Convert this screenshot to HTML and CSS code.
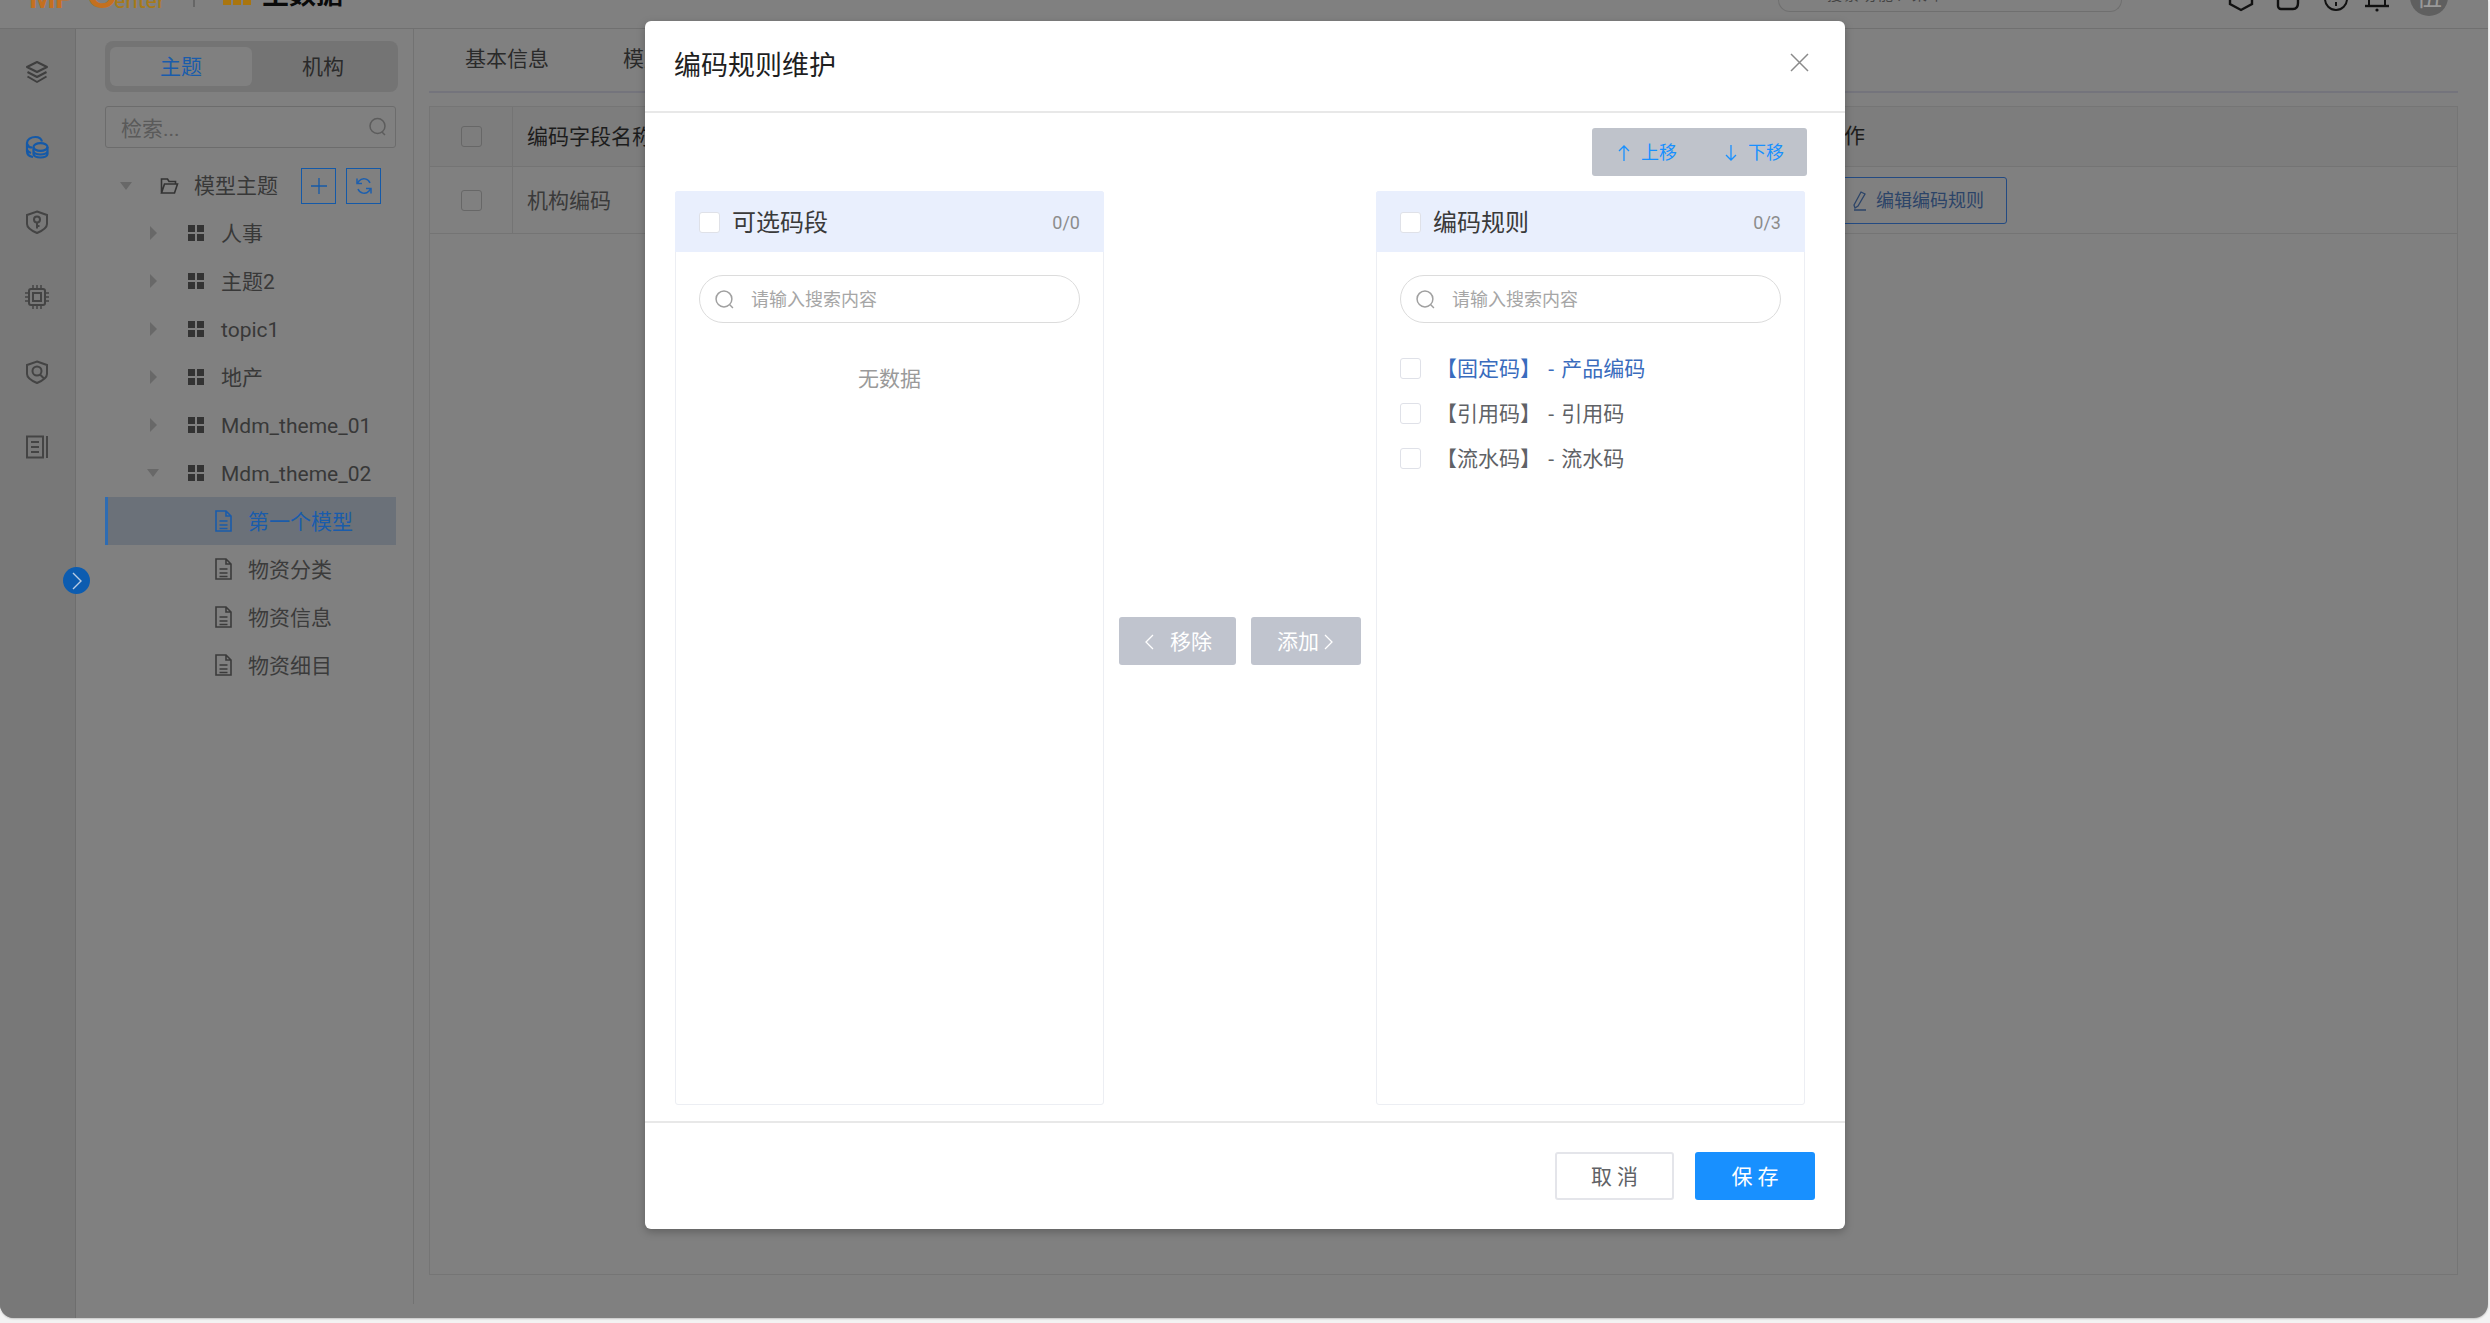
FILE: index.html
```html
<!DOCTYPE html>
<html lang="zh">
<head>
<meta charset="utf-8">
<title>编码规则维护</title>
<link rel="stylesheet" href="styles.css">
</head>
<body>
<div class="page">
  <header class="topbar">
    <div class="logo"><span class="logo-big">MP</span><span class="logo-c">C</span><span class="logo-small">enter</span></div>
    <span class="top-sep"></span>
    <svg class="brand-icon" width="28" height="24" viewBox="0 0 28 24"><path fill="#a9750f" d="M0 0h8v24H0zM10 6h8v18h-8zM20 0h8v24h-8z"/></svg>
    <span class="brand">主数据</span>
    <div class="top-search"><span class="top-search-text">搜索功能、菜单</span></div>
    <div class="top-icons">
      <svg width="26" height="36" viewBox="0 0 26 36"><path d="M2 14v12l11 6 11-6V14" fill="none" stroke="#111" stroke-width="2.4"/></svg>
      <svg width="38" height="36" viewBox="0 0 26 36"><path d="M3 22v6a3 3 0 0 0 3 3h12c4 0 5-3 5-6V10" fill="none" stroke="#111" stroke-width="2.4"/></svg>
      <svg width="28" height="36" viewBox="0 0 24 36"><circle cx="12" cy="21" r="11" fill="none" stroke="#111" stroke-width="2"/><path d="M12 24v4" stroke="#111" stroke-width="2"/></svg>
      <svg width="24" height="36" viewBox="0 0 24 36"><path d="M4 10v18M20 10v18" stroke="#111" stroke-width="2" fill="none"/><path d="M0 28h24" stroke="#111" stroke-width="2.4"/><circle cx="12" cy="32" r="1.6" fill="#111"/></svg>
      <div class="avatar"><span class="avatar-text">伍</span></div>
    </div>
  </header>

  <div class="main">
    <nav class="rail">
      <svg class="rail-icon" width="24" height="24" viewBox="0 0 24 24" fill="none" stroke="#3f3f3f" stroke-width="2" stroke-linejoin="round"><path d="M12 2 2 7l10 5 10-5z"/><path d="M2.5 12 12 17l9.500-5"/><path d="M2.500 16.500 12 22l9.500-5.500"/></svg>
      <svg class="rail-icon" width="24" height="24" viewBox="0 0 24 24" fill="none" stroke="#1459a8" stroke-width="2.200"><path d="M17 6.500C16 3 13 2 10.500 2 6 2 2 4.500 2 8v8c0 3 2 5.500 6 6"/><path d="M2 9c1 2.500 3.500 3.500 5 3.500M2 15c1 1.500 2.500 2.500 4 3"/><ellipse cx="15.500" cy="12" rx="7" ry="3.800"/><path d="M8.500 12v7c0 2 3 3.500 7 3.500s7-1.500 7-3.500v-7M8.500 16c0 2 3 3.500 7 3.500s7-1.500 7-3.500"/></svg>
      <svg class="rail-icon" width="24" height="24" viewBox="0 0 24 24" fill="none" stroke="#444" stroke-width="2"><path d="M12 1.500 22 5v9c0 4-4 6.500-10 9-6-2.500-10-5-10-9V5z"/><circle cx="12" cy="9.500" r="3"/><path d="M12 12.500v6M12 16h2.500"/></svg>
      <svg class="rail-icon" width="24" height="24" viewBox="0 0 24 24" fill="none" stroke="#444" stroke-width="2"><rect x="4" y="4" width="16" height="16" rx="2"/><rect x="8" y="8" width="8" height="8"/><path d="M8 0v4M12 0v4M16 0v4M8 20v4M12 20v4M16 20v4M0 8h4M0 12h4M0 16h4M20 8h4M20 12h4M20 16h4" stroke-width="1.500"/></svg>
      <svg class="rail-icon" width="24" height="24" viewBox="0 0 24 24" fill="none" stroke="#444" stroke-width="2"><path d="M12 1.500 22 5v9c0 4-4 6.500-10 9-6-2.500-10-5-10-9V5z"/><circle cx="12" cy="11" r="4.500"/><path d="m15 14.500 4 4"/></svg>
      <svg class="rail-icon" width="24" height="24" viewBox="0 0 24 24" fill="none" stroke="#444" stroke-width="2"><rect x="2" y="1.500" width="16" height="21"/><path d="M6 7h8M6 12h8M6 17h8M22 1v22"/></svg>
    </nav>
    <button class="rail-toggle" type="button"><svg width="10" height="18" viewBox="0 0 10 18" fill="none" stroke="#b9cde4" stroke-width="1.400"><path d="m1 1 8 8-8 8"/></svg></button>

    <aside class="side">
      <div class="seg">
        <div class="seg-item seg-on">主题</div>
        <div class="seg-item">机构</div>
      </div>
      <div class="side-search">
        <span>检索...</span>
        <svg width="18" height="20" viewBox="0 0 18 20" fill="none" stroke="#5c5c5c" stroke-width="1.500"><circle cx="8.500" cy="9" r="7.500"/><path d="m13 15 3 3"/></svg>
      </div>
      <div class="tree">
        <div class="row row-root">
          <span class="caret caret-down caret-root"></span>
          <svg class="ico-folder" width="19" height="18" viewBox="0 0 19 18" fill="none" stroke="#333" stroke-width="1.600"><path d="M1.500 16V2h6l1.500 2.500h6.500V7M1.500 16h13l3-9H4.500z"/></svg>
          <span class="label">模型主题</span>
          <button class="mini" type="button"><svg width="16" height="16" viewBox="0 0 16 16" stroke="#1459a8" stroke-width="1.300"><path d="M8 0v16M0 8h16"/></svg></button>
          <button class="mini" type="button"><svg width="16" height="18" viewBox="0 0 16 18" fill="none" stroke="#1d5fae" stroke-width="1.500"><path d="M14 6a6.500 6.500 0 0 0-11-2L1.500 6M2 12a6.500 6.500 0 0 0 11 2l1.500-2"/><path d="M1 1.500V6.500h5M15 16.500V11.500h-5"/></svg></button>
        </div>
        <div class="row row-child"><span class="caret caret-right"></span><span class="grid4"><i></i><i></i><i></i><i></i></span><span class="label">人事</span></div>
        <div class="row row-child"><span class="caret caret-right"></span><span class="grid4"><i></i><i></i><i></i><i></i></span><span class="label">主题2</span></div>
        <div class="row row-child"><span class="caret caret-right"></span><span class="grid4"><i></i><i></i><i></i><i></i></span><span class="label">topic1</span></div>
        <div class="row row-child"><span class="caret caret-right"></span><span class="grid4"><i></i><i></i><i></i><i></i></span><span class="label">地产</span></div>
        <div class="row row-child"><span class="caret caret-right"></span><span class="grid4"><i></i><i></i><i></i><i></i></span><span class="label">Mdm_theme_01</span></div>
        <div class="row row-child"><span class="caret caret-down"></span><span class="grid4"><i></i><i></i><i></i><i></i></span><span class="label">Mdm_theme_02</span></div>
        <div class="row row-leaf row-on"><svg class="ico-file" width="17" height="22" viewBox="0 0 17 22" fill="none" stroke="currentColor" stroke-width="1.600"><path d="M1 1h10l5 5v15H1zM11 1v5h5M4.500 11h8M4.500 15h8M4.500 18.500h8"/></svg><span class="label">第一个模型</span></div>
        <div class="row row-leaf"><svg class="ico-file" width="17" height="22" viewBox="0 0 17 22" fill="none" stroke="currentColor" stroke-width="1.600"><path d="M1 1h10l5 5v15H1zM11 1v5h5M4.500 11h8M4.500 15h8M4.500 18.500h8"/></svg><span class="label">物资分类</span></div>
        <div class="row row-leaf"><svg class="ico-file" width="17" height="22" viewBox="0 0 17 22" fill="none" stroke="currentColor" stroke-width="1.600"><path d="M1 1h10l5 5v15H1zM11 1v5h5M4.500 11h8M4.500 15h8M4.500 18.500h8"/></svg><span class="label">物资信息</span></div>
        <div class="row row-leaf"><svg class="ico-file" width="17" height="22" viewBox="0 0 17 22" fill="none" stroke="currentColor" stroke-width="1.600"><path d="M1 1h10l5 5v15H1zM11 1v5h5M4.500 11h8M4.500 15h8M4.500 18.500h8"/></svg><span class="label">物资细目</span></div>
      </div>
    </aside>

    <section class="content">
      <div class="tabs">
        <span class="tab">基本信息</span>
        <span class="tab">模型字段</span>
      </div>
      <div class="box">
        <div class="t-row t-head">
          <div class="t-check"><span class="cb-dim"></span></div>
          <div class="t-name">编码字段名称</div>
          <div class="t-op">操作</div>
        </div>
        <div class="t-row t-body">
          <div class="t-check"><span class="cb-dim"></span></div>
          <div class="t-name">机构编码</div>
          <div class="t-op">
            <button class="edit-btn" type="button">
              <svg width="14" height="20" viewBox="0 0 14 20" fill="none" stroke="#2c4468" stroke-width="1.300"><path d="m8 1 4 2-7 12-3 2-1-3zM1 19h12"/></svg>
              编辑编码规则
            </button>
          </div>
        </div>
      </div>
    </section>
  </div>

  <div class="modal">
    <div class="m-head">
      <span class="m-title">编码规则维护</span>
      <svg class="m-close" width="19" height="19" viewBox="0 0 19 19" stroke="#8a8a8a" stroke-width="1.500"><path d="m1 1 17 17M18 1 1 18"/></svg>
    </div>
    <div class="m-body">
      <div class="m-tools">
        <div class="move-group">
          <span class="move-item"><svg width="12" height="16" viewBox="0 0 12 16" fill="none" stroke="#1890ff" stroke-width="1.300"><path d="M6 16V1M1 6l5-5 5 5"/></svg>上移</span>
          <span class="move-item"><svg width="12" height="16" viewBox="0 0 12 16" fill="none" stroke="#1890ff" stroke-width="1.300"><path d="M6 0v15M1 10l5 5 5-5"/></svg>下移</span>
        </div>
      </div>
      <div class="transfer">
        <div class="t-panel">
          <div class="tp-head">
            <span class="cb cb-head"></span>
            <span class="tp-title">可选码段</span>
            <span class="tp-count">0/0</span>
          </div>
          <div class="tp-search">
            <svg width="19" height="19" viewBox="0 0 18 18" fill="none" stroke="#a0a0a0" stroke-width="1.400"><circle cx="8.500" cy="8.500" r="7.500"/><path d="m14 14 3 3"/></svg>
            <span class="tp-ph">请输入搜索内容</span>
          </div>
          <div class="tp-empty">无数据</div>
        </div>
        <div class="t-ops">
          <button class="op-btn op-remove" type="button"><svg width="9" height="16" viewBox="0 0 9 16" fill="none" stroke="#fff" stroke-width="1.300"><path d="M8 1 1 8l7 7"/></svg>移除</button>
          <button class="op-btn op-add" type="button">添加<svg width="9" height="16" viewBox="0 0 9 16" fill="none" stroke="#fff" stroke-width="1.300"><path d="m1 1 7 7-7 7"/></svg></button>
        </div>
        <div class="t-panel">
          <div class="tp-head">
            <span class="cb cb-head"></span>
            <span class="tp-title">编码规则</span>
            <span class="tp-count">0/3</span>
          </div>
          <div class="tp-search">
            <svg width="19" height="19" viewBox="0 0 18 18" fill="none" stroke="#a0a0a0" stroke-width="1.400"><circle cx="8.500" cy="8.500" r="7.500"/><path d="m14 14 3 3"/></svg>
            <span class="tp-ph">请输入搜索内容</span>
          </div>
          <ul class="tp-list">
            <li class="tp-item tp-item-on"><span class="cb"></span><span class="tp-text">【固定码】 - 产品编码</span></li>
            <li class="tp-item"><span class="cb"></span><span class="tp-text">【引用码】 - 引用码</span></li>
            <li class="tp-item"><span class="cb"></span><span class="tp-text">【流水码】 - 流水码</span></li>
          </ul>
        </div>
      </div>
    </div>
    <div class="m-foot">
      <button class="btn-cancel" type="button">取 消</button>
      <button class="btn-save" type="button">保 存</button>
    </div>
  </div>
</div>
</body>
</html>
```

FILE: styles.css
```css
* { box-sizing: border-box; }
html, body { margin: 0; padding: 0; }
body {
  width: 2490px;
  height: 1323px;
  overflow: hidden;
  background: #f3f3f3;
  font-family: Roboto, "Noto Sans CJK SC", sans-serif;
  font-size: 21px;
  color: #383838;
}
button { font: inherit; cursor: pointer; padding: 0; }
ul { list-style: none; margin: 0; padding: 0; }

.page {
  position: relative;
  width: 2488px;
  height: 1318px;
  background: #808080;
  border-radius: 0 0 14px 14px;
  overflow: hidden;
  display: flex;
  flex-direction: column;
  box-shadow: 0 1px 2px rgba(0,0,0,.2);
}

.topbar {
  height: 29px;
  flex: none;
  border-bottom: 1px solid #707070;
  display: flex;
  align-items: flex-start;
  overflow: hidden;
  padding-left: 29px;
}
.logo {
  display: flex;
  align-items: flex-end;
  height: 8px;
  width: 135px;
  flex: none;
  color: #c4701f;
  line-height: 1;
}
.logo-big { font: 700 32px/32px "Liberation Sans", sans-serif; letter-spacing: -1px; margin-bottom: -5px; }
.logo-c { font: 700 40px/40px "Liberation Sans", sans-serif; margin-left: 12px; margin-bottom: -6px; }
.logo-small { font: 500 20px/20px "Noto Sans", sans-serif; color: #a87a17; margin-left: -2px; margin-bottom: -3px; }
.top-sep { width: 2px; height: 7px; background: #666; margin-left: 29px; flex: none; }
.brand-icon { margin: -19px 0 0 28px; flex: none; }
.brand {
  flex: none;
  height: 6px;
  margin-left: 11px;
  font: 700 27px/27px "Noto Sans CJK SC", sans-serif;
  color: #0a0a0a;
  display: flex;
  align-items: flex-end;
}
.top-search {
  flex: none;
  width: 344px;
  height: 12px;
  margin-left: 1435px;
  border: 1px solid #6f6f6f;
  border-top: 0;
  border-radius: 0 0 24px 24px;
  padding-left: 48px;
  display: flex;
  align-items: flex-end;
  overflow: hidden;
}
.top-search-text { font-size: 15px; line-height: 16px; margin-bottom: 8px; color: #444; letter-spacing: 2px; }
.top-icons {
  flex: none;
  display: flex;
  align-items: flex-start;
  gap: 15px;
  margin: -22px 0 0 106px;
}
.avatar {
  width: 38px;
  height: 38px;
  margin-left: 6px;
  border-radius: 50%;
  background: #5f5f5f;
  display: flex;
  align-items: center;
  justify-content: center;
  color: #999;
  font-size: 26px;
  line-height: 1;
  overflow: hidden;
}

.main { flex: 1; display: flex; min-height: 0; position: relative; }

/* icon rail */
.rail {
  width: 76px;
  flex: none;
  background: #787878;
  border-right: 1px solid #6e6e6e;
  display: flex;
  flex-direction: column;
  align-items: center;
  padding: 31px 1px 0 0;
  gap: 51px;
}
.rail-icon { flex: none; }
.rail-toggle {
  position: absolute;
  left: 63px;
  top: 538px;
  width: 27px;
  height: 27px;
  border-radius: 50%;
  border: 0;
  background: #0c5cb0;
  display: flex;
  align-items: center;
  justify-content: center;
}

/* tree side */
.side {
  width: 338px;
  flex: none;
  margin-bottom: 14px;
  border-right: 1px solid #727272;
  padding: 12px 17px 0 29px;
}
.seg {
  width: 293px;
  height: 51px;
  background: #747474;
  border-radius: 8px;
  padding: 6px 4px 6px 5px;
  display: flex;
}
.seg-item {
  flex: 1;
  display: flex;
  align-items: center;
  justify-content: center;
  font-size: 21px;
  line-height: 1;
  color: #2a2a2a;
  border-radius: 6px;
  padding-top: 2px;
}
.seg-on { background: #808080; color: #1a5cab; }
.side-search {
  height: 42px;
  margin-top: 14px;
  border: 1px solid #6c6c6c;
  border-radius: 3px;
  display: flex;
  align-items: center;
  justify-content: space-between;
  padding: 0 8px 0 15px;
  color: #5a5a5a;
  font-size: 21px;
}
.tree { margin-top: 14px; }
.row {
  display: flex;
  align-items: center;
  height: 48px;
  line-height: 1;
  white-space: nowrap;
}
.row-root { height: 47px; padding-left: 15px; }
.row-child { padding-left: 45px; }
.row-leaf { padding-left: 110px; color: #3b3b3b; }
.row-on { background: #6b7179; border-left: 3px solid #2e6cb3; padding-left: 107px; color: #1a5cab; }
.label { padding-top: 2px; }
.caret { width: 0; height: 0; flex: none; }
.caret-down { border-left: 6px solid transparent; border-right: 6px solid transparent; border-top: 8px solid #686868; margin-left: -3px; }
.caret-right { border-top: 7px solid transparent; border-bottom: 7px solid transparent; border-left: 7px solid #686868; }
.caret-root { margin-left: 0; }
.ico-folder { margin-left: 28px; flex: none; }
.row-root .label { margin-left: 15px; width: 107px; }
.grid4 {
  display: grid;
  grid-template-columns: 7px 7px;
  grid-template-rows: 7px 7px;
  gap: 2px;
  margin-left: 31px;
  flex: none;
}
.row-child .caret-down + .grid4 { margin-left: 29px; }
.grid4 i { background: #333; }
.row-child .label { margin-left: 17px; }
.ico-file { flex: none; }
.row-leaf .label { margin-left: 16px; }
.mini {
  width: 35px;
  height: 36px;
  flex: none;
  background: transparent;
  border: 1px solid #1459a8;
  display: flex;
  align-items: center;
  justify-content: center;
  margin-right: 10px;
}

/* content */
.content { flex: 1; min-width: 0; padding: 0 30px 43px 15px; display: flex; flex-direction: column; }
.tabs {
  height: 64px;
  flex: none;
  border-bottom: 2px solid #74747c;
  padding: 1px 0 0 36px;
  display: flex;
  gap: 74px;
  margin-bottom: 13px;
}
.tab { font-size: 21px; line-height: 58px; color: #2a2a2a; }
.box { flex: 1; border: 1px solid #757575; }
.t-row { display: flex; border-bottom: 1px solid #747474; }
.t-head { height: 60px; background: #7d7d7d; color: #1c1c1c; }
.t-body { height: 67px; color: #3a3a3a; }
.t-check {
  width: 83px;
  flex: none;
  border-right: 1px solid #747474;
  display: flex;
  align-items: center;
  justify-content: center;
}
.cb-dim { width: 21px; height: 21px; border: 1px solid #676767; border-radius: 3px; display: block; }
.t-name { flex: 1; padding: 2px 0 0 14px; display: flex; align-items: center; line-height: 1; }
.t-op { width: 648px; flex: none; padding-left: 14px; display: flex; align-items: center; line-height: 1; }
.edit-btn {
  height: 47px;
  width: 195px;
  margin-left: -11px;
  padding: 1px 22px 0 0;
  background: transparent;
  border: 1px solid #234a82;
  border-radius: 3px;
  color: #2c4468;
  font-size: 18px;
  line-height: 1;
  display: flex;
  align-items: center;
  justify-content: flex-end;
  gap: 9px;
}

/* dialog */
.modal {
  position: absolute;
  left: 645px;
  top: 21px;
  width: 1200px;
  height: 1208px;
  background: #fff;
  border-radius: 6px;
  box-shadow: 0 3px 9px rgba(0,0,0,.25);
  display: flex;
  flex-direction: column;
  color: #333;
}
.m-head {
  height: 92px;
  flex: none;
  border-bottom: 2px solid #e8e8e8;
  padding: 0 36px 8px 29px;
  display: flex;
  align-items: center;
  justify-content: space-between;
}
.m-title { font-size: 27px; line-height: 1; color: #1f1f1f; margin-top: 9px; }
.m-close { flex: none; }
.m-body { flex: 1; min-height: 0; padding: 15px 40px 16px 30px; display: flex; flex-direction: column; }
.m-tools { display: flex; justify-content: flex-end; margin-right: -2px; margin-bottom: 15px; flex: none; }
.move-group {
  width: 215px;
  height: 48px;
  background: #bfc3cb;
  border-radius: 3px;
  display: flex;
  align-items: center;
  gap: 48px;
  padding: 2px 0 0 26px;
  color: #1890ff;
  font-size: 18px;
  line-height: 1;
}
.move-item { display: flex; align-items: center; gap: 11px; }
.transfer { flex: 1; min-height: 0; display: flex; }
.t-panel {
  width: 429px;
  flex: none;
  border: 1px solid #eceef3;
  border-radius: 3px;
  display: flex;
  flex-direction: column;
}
.tp-head {
  height: 61px;
  flex: none;
  background: #e9effd;
  margin: -1px -1px 0;
  padding: 1px 24px 0;
  display: flex;
  align-items: center;
  border-radius: 3px 3px 0 0;
}
.cb { width: 21px; height: 21px; flex: none; border: 1px solid #dfe1e8; border-radius: 3px; background: #fff; display: block; }
.tp-title { font-size: 24px; line-height: 1; margin: 1px 0 0 12px; color: #3a3a3a; }
.tp-count { margin: 1px 0 0 auto; font-size: 18px; line-height: 1; color: #8c8c8c; }
.tp-search {
  margin: 23px 23px 0;
  height: 48px;
  flex: none;
  border: 1px solid #dcdcdc;
  border-radius: 24px;
  padding-left: 15px;
  display: flex;
  align-items: center;
  gap: 17px;
  font-size: 18px;
  line-height: 1;
  color: #a6a6a6;
}
.tp-ph { padding-top: 2px; }
.tp-empty { margin-top: 40px; text-align: center; font-size: 21px; line-height: 32px; color: #9a9a9a; }
.tp-list { margin: 23px 23px 0; }
.tp-item {
  height: 45px;
  display: flex;
  align-items: center;
  gap: 15px;
  font-size: 21px;
  line-height: 1;
  color: #606266;
  white-space: pre;
  word-spacing: 2px;
}
.tp-text { padding-top: 2px; }
.tp-item-on { color: #3a6cbd; }
.t-ops {
  flex: 1;
  display: flex;
  align-items: center;
  justify-content: center;
  gap: 15px;
  padding-bottom: 14px;
}
.op-btn {
  height: 48px;
  background: #c0c4ce;
  border: 0;
  border-radius: 3px;
  color: #fff;
  font-size: 21px;
  line-height: 1;
  display: flex;
  align-items: center;
  justify-content: center;
}
.op-remove { width: 117px; gap: 16px; padding: 2px 0 0 2px; }
.op-add { width: 110px; gap: 5px; padding: 2px 2px 0 0; }
.m-foot {
  height: 108px;
  flex: none;
  border-top: 2px solid #e8e8e8;
  padding: 29px 30px 0 0;
  display: flex;
  justify-content: flex-end;
  align-items: flex-start;
  gap: 21px;
}
.btn-cancel, .btn-save {
  height: 48px;
  border-radius: 3px;
  font-size: 21px;
  line-height: 1;
  padding-top: 2px;
}
.btn-cancel { width: 119px; background: #fff; border: 2px solid #e4e5ea; color: #606266; }
.btn-save { width: 120px; background: #1890ff; border: 0; color: #fff; }
```
